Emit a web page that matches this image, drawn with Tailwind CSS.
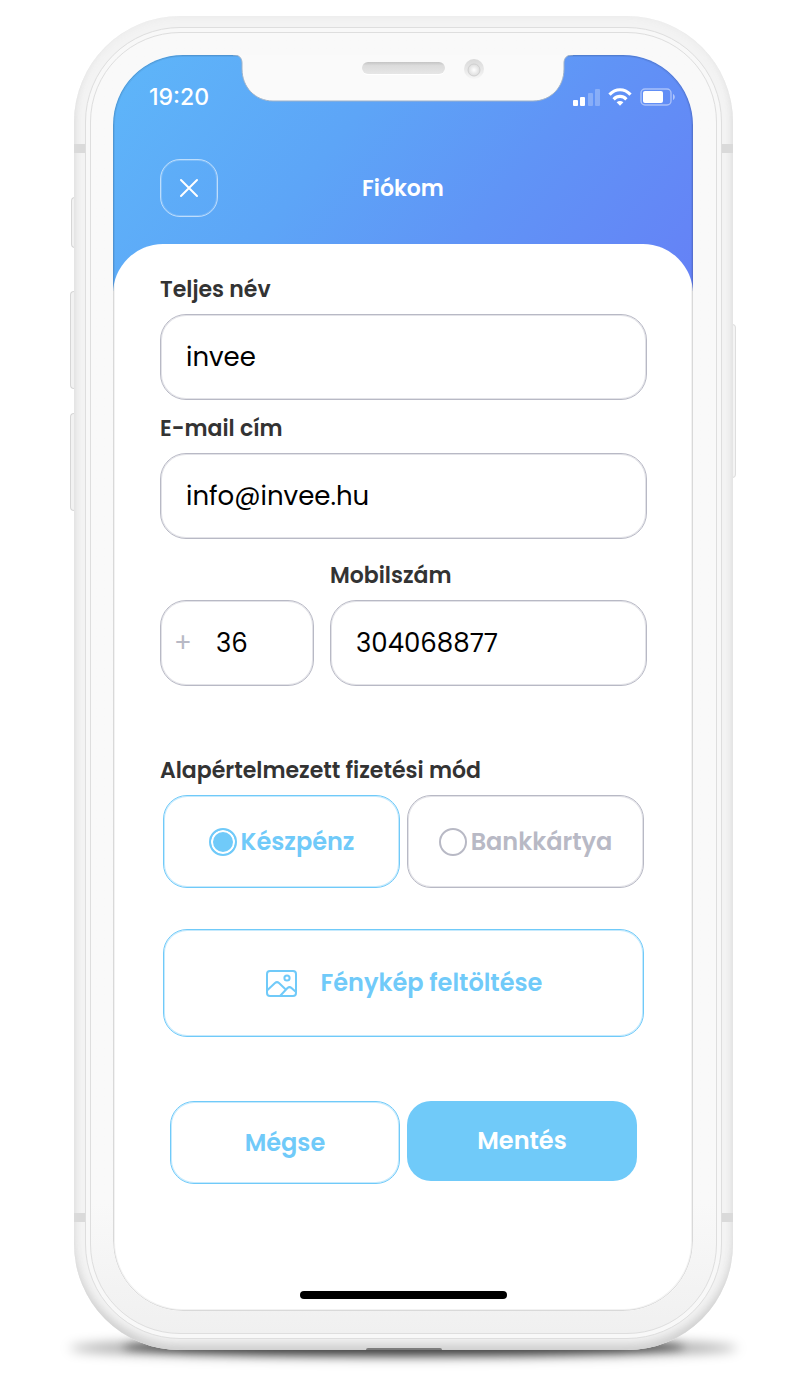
<!DOCTYPE html>
<html lang="hu">
<head>
    <meta charset="UTF-8">
    <meta name="viewport" content="width=device-width, initial-scale=1.0">
    <title>Fiókom</title>
    <script src="https://cdn.jsdelivr.net/npm/@tailwindcss/browser@4"></script>
</head>
<body class="bg-white font-['Poppins','Inter',sans-serif]">
    <main class="pt-4 pb-12 pl-[74px] pr-[67px]">
        <div class="relative isolate mx-auto max-w-[660px]">

            <!-- Shadow under the phone -->
            <div class="absolute -bottom-2 -inset-x-1 h-5 -z-10 rounded-[50%] bg-black/35 blur-[6px]"></div>
            <div class="absolute -bottom-[5px] inset-x-12 h-4 -z-10 rounded-[50%] bg-black/60 blur-[4px]"></div>

            <!-- Side buttons -->
            <div class="absolute -left-[3px] top-[181px] w-1 h-[51px] rounded-l border border-r-0 border-[#d6d6d6] bg-[#f2f2f2]"></div>
            <div class="absolute -left-1 top-[275px] w-[5px] h-[98px] rounded-l border border-r-0 border-[#d6d6d6] bg-[#f2f2f2]"></div>
            <div class="absolute -left-1 top-[397px] w-[5px] h-[98px] rounded-l border border-r-0 border-[#d6d6d6] bg-[#f2f2f2]"></div>
            <div class="absolute -right-[3px] top-[308px] w-[5px] h-[154px] rounded-r border border-l-0 border-[#dedede] bg-[#f4f4f4]"></div>

            <div class="relative rounded-[106px] bg-[#f3f3f3] p-[11px] shadow-[inset_0_-8px_10px_-2px_#cfcfcf,inset_0_0_8px_#e9e9e9]">
                <!-- Antenna lines -->
                <div class="absolute left-0 top-32 w-[11px] h-[9px] bg-[#dadada]"></div>
                <div class="absolute right-0 top-32 w-[11px] h-[9px] bg-[#dadada]"></div>
                <div class="absolute left-0 bottom-32 w-[11px] h-[9px] bg-[#dadada]"></div>
                <div class="absolute right-0 bottom-32 w-[11px] h-[9px] bg-[#dadada]"></div>

                <div class="rounded-[95px] border border-[#dedede] bg-[#f8f8f8] p-1">
                    <div class="rounded-[90px] border border-[#dedede] bg-linear-to-b from-[#f9f9f9] from-90% to-[#f0f0f0] p-[22px] pr-[23px]">
                        <div class="relative overflow-hidden rounded-[70px] bg-linear-[128deg,#5eb6f9_0%,#5da5f7_38%,#6094f6_65%,#6581f6_100%] bg-size-[100%_236px] bg-no-repeat">

                            <header>
                                <div class="flex justify-between items-center h-[84px] pl-9 pr-[17px] text-white">
                                    <span class="font-['Inter',sans-serif] text-[23px] font-medium">19:20</span>
                                    <svg width="104" height="20" viewBox="0 0 104 20" fill="#fff" role="img" aria-label="Térerő, Wi-Fi, akkumulátor">
                                        <rect x="1" y="13" width="5" height="6" rx="1"/>
                                        <rect x="8" y="10" width="5" height="9" rx="1"/>
                                        <rect x="16" y="6" width="5" height="13" rx="1" opacity="0.25"/>
                                        <rect x="23" y="2" width="5" height="17" rx="1" opacity="0.25"/>
                                        <g fill="none" stroke="#fff" stroke-width="3.2">
                                            <path d="M37.5 7.6C43.8 1.1 52.2 1.1 58.5 7.6"/>
                                            <path d="M41.6 12.3C45.4 8.5 50.6 8.5 54.4 12.3"/>
                                        </g>
                                        <path d="M44.6 15.3C46.8 13.5 49.2 13.5 51.4 15.3L48 18.7Z"/>
                                        <rect x="69" y="2" width="30" height="16" rx="4" fill="none" stroke="#fff" stroke-opacity="0.45" stroke-width="1.4"/>
                                        <rect x="71" y="4" width="20" height="12" rx="2"/>
                                        <path d="M101 7C103.400 8.400 103.400 11.600 101 13Z" opacity="0.5"/>
                                    </svg>
                                </div>
                                <div class="grid grid-cols-[58px_1fr_58px] items-center px-[47px] pt-5 pb-[27px]">
                                    <button type="button" aria-label="Bezárás" class="flex items-center justify-center size-[58px] rounded-[20px] border border-white/60 shadow-[inset_0_0_0_1px_#ffffff33] text-white">
                                        <svg width="20" height="20" viewBox="0 0 20 20" fill="none" stroke="currentColor" stroke-width="2" stroke-linecap="round"><path d="M2 2L18 18M18 2L2 18"/></svg>
                                    </button>
                                    <h1 class="text-center text-[22px] font-semibold text-white">Fiókom</h1>
                                </div>
                            </header>

                            <form class="rounded-t-[50px] bg-white pl-[47px] pr-[46px] pt-[34px] pb-3 text-[#333]" onsubmit="return false">
                                <label for="name" class="block mb-3 text-[22px] leading-6 font-semibold">Teljes név</label>
                                <input id="name" type="text" value="invee" class="block w-full h-[86px] rounded-[26px] border border-[#b8b9c5] shadow-[inset_0_0_0_1px_#b8b9c566] px-[25px] text-[26px] text-black">

                                <label for="email" class="block mt-[17px] mb-3 text-[22px] leading-6 font-semibold">E-mail cím</label>
                                <input id="email" type="email" value="info@invee.hu" class="block w-full h-[86px] rounded-[26px] border border-[#b8b9c5] shadow-[inset_0_0_0_1px_#b8b9c566] px-[25px] text-[26px] text-black">

                                <div class="flex items-end gap-4 mt-[25px]">
                                    <div class="flex items-center w-[154px] h-[86px] rounded-[26px] border border-[#b8b9c5] shadow-[inset_0_0_0_1px_#b8b9c566] pl-[13px] pr-4">
                                        <span class="w-[42px] text-[26px] text-[#b8b9c5]">+</span>
                                        <input type="text" inputmode="numeric" value="36" aria-label="Országkód" class="min-w-0 flex-1 text-[26px] text-black">
                                    </div>
                                    <div class="min-w-0 flex-1">
                                        <label for="phone" class="block mb-3 text-[22px] leading-6 font-semibold">Mobilszám</label>
                                        <input id="phone" type="tel" value="304068877" class="block w-full h-[86px] rounded-[26px] border border-[#b8b9c5] shadow-[inset_0_0_0_1px_#b8b9c566] px-[25px] text-[26px] text-black">
                                    </div>
                                </div>

                                <fieldset class="mt-[73px]">
                                    <legend class="mb-3 text-[22px] leading-6 font-semibold">Alapértelmezett fizetési mód</legend>
                                    <div class="grid grid-cols-2 gap-[7px] px-[3px]">
                                        <label class="flex items-center justify-center gap-1 h-[93px] rounded-3xl border border-[#70caf9] shadow-[inset_0_0_0_1px_#70caf966] text-[24px] font-semibold text-[#70caf9]">
                                            <input type="radio" name="payment" checked class="appearance-none size-7 rounded-full border-2 border-[#b8b9c5] checked:border-[#70caf9] checked:bg-[#70caf9] checked:shadow-[inset_0_0_0_2px_#fff]">
                                            Készpénz
                                        </label>
                                        <label class="flex items-center justify-center gap-1 h-[93px] rounded-3xl border border-[#b8b9c5] shadow-[inset_0_0_0_1px_#b8b9c566] text-[24px] font-semibold text-[#b8b9c5]">
                                            <input type="radio" name="payment" class="appearance-none size-7 rounded-full border-2 border-[#b8b9c5] checked:border-[#70caf9] checked:bg-[#70caf9] checked:shadow-[inset_0_0_0_2px_#fff]">
                                            Bankkártya
                                        </label>
                                    </div>
                                </fieldset>

                                <div class="mt-[41px] px-[3px]">
                                    <button type="button" class="flex items-center justify-center gap-6 w-full h-[108px] rounded-3xl border border-[#70caf9] shadow-[inset_0_0_0_1px_#70caf966] text-[24px] font-semibold text-[#70caf9]">
                                        <svg width="32" height="28" viewBox="0 0 32 28" fill="none" stroke="currentColor" stroke-width="2" stroke-linejoin="round">
                                            <rect x="2" y="2" width="29" height="25" rx="3"/>
                                            <circle cx="22" cy="9" r="2.6"/>
                                            <path d="M2 21.500L10 14Q12 12.300 14 14L21 20.800M15 27L22.500 19Q24.500 17.200 26.500 19L31 23"/>
                                        </svg>
                                        Fénykép feltöltése
                                    </button>
                                </div>

                                <div class="grid grid-cols-2 items-start gap-[7px] mt-16 px-[10px]">
                                    <button type="button" class="h-[83px] rounded-3xl border border-[#70caf9] shadow-[inset_0_0_0_1px_#70caf966] text-[24px] font-semibold text-[#70caf9]">Mégse</button>
                                    <button type="submit" class="h-20 rounded-3xl bg-[#70caf9] text-[24px] font-semibold text-white">Mentés</button>
                                </div>

                                <div class="mx-auto mt-[107px] w-[207px] h-2 rounded-full bg-black"></div>
                            </form>

                            <!-- Screen edge -->
                            <div class="absolute inset-0 rounded-[70px] border border-black/15 shadow-[inset_0_0_0_1px_#0000000d] pointer-events-none"></div>

                            <!-- Notch -->
                            <svg class="absolute top-0 left-1/2 -translate-x-1/2" width="340" height="48" viewBox="0 0 340 48" aria-hidden="true">
                                <defs>
                                    <linearGradient id="speaker" x1="0" y1="0" x2="0" y2="1">
                                        <stop offset="0" stop-color="#c4c4c4"/>
                                        <stop offset="0.3" stop-color="#dcdcdc"/>
                                        <stop offset="1" stop-color="#e6e6e6"/>
                                    </linearGradient>
                                    <linearGradient id="cameraRing" x1="0" y1="0" x2="0" y2="1">
                                        <stop offset="0" stop-color="#d9d9d9"/>
                                        <stop offset="1" stop-color="#f6f6f6"/>
                                    </linearGradient>
                                    <radialGradient id="lens">
                                        <stop offset="0" stop-color="#ffffff"/>
                                        <stop offset="1" stop-color="#dddddd"/>
                                    </radialGradient>
                                </defs>
                                <path d="M0 0H1C6 0 9 3 9 8V14C9 32 22 46 40 46H300C318 46 331 32 331 14V8C331 3 334 0 339 0H340V-2H0Z" fill="#fafafa" stroke="#9fb2c8" stroke-width="1"/>
                                <rect x="129" y="7" width="83" height="13" rx="6" fill="#ffffff"/>
                                <rect x="129" y="7" width="83" height="12" rx="6" fill="url(#speaker)"/>
                                <circle cx="241" cy="14" r="10" fill="url(#cameraRing)"/>
                                <circle cx="241" cy="15" r="6" fill="url(#lens)" stroke="#d0d0d0"/>
                            </svg>
                        </div>
                    </div>
                </div>
            </div>

            <!-- Charging port -->
            <div class="absolute bottom-0 left-1/2 -translate-x-1/2 w-[76px] h-0.5 rounded-t-full bg-[#7c7c7c]"></div>
        </div>
    </main>
</body>
</html>
